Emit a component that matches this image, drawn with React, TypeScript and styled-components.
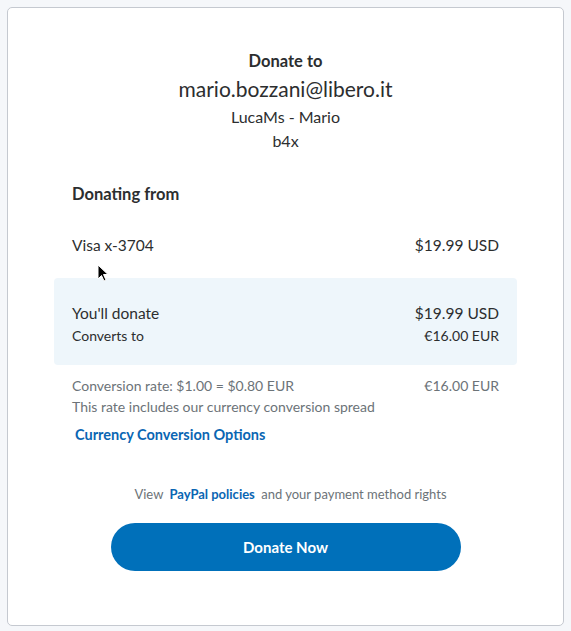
import React from "react";
import styled, { createGlobalStyle } from "styled-components";

const GlobalStyle = createGlobalStyle`
  html, body {
    margin: 0;
    padding: 0;
    background: #f5f7fa;
    font-family: Lato, "Noto Sans", sans-serif;
    color: #2c2e2f;
  }
`;

const App = () => (
  <>
    <GlobalStyle />
    <Page>
      <Card>
        <Recipient>
          <Label>Donate to</Label>
          <Email>mario.bozzani@libero.it</Email>
          <Sub>LucaMs - Mario</Sub>
          <Sub>b4x</Sub>
        </Recipient>

        <SectionTitle>Donating from</SectionTitle>

        <SourceRow>
          <MainText>Visa x-3704</MainText>
          <MainText>$19.99 USD</MainText>
        </SourceRow>

        <Summary>
          <Row>
            <MainText>You'll donate</MainText>
            <MainText>$19.99 USD</MainText>
          </Row>
          <Row>
            <SmallText>Converts to</SmallText>
            <SmallText>€16.00 EUR</SmallText>
          </Row>
        </Summary>

        <RateBlock>
          <Row>
            <GreyText>Conversion rate: $1.00 = $0.80 EUR</GreyText>
            <GreyText>€16.00 EUR</GreyText>
          </Row>
          <GreyText>This rate includes our currency conversion spread</GreyText>
          <Link>Currency Conversion Options</Link>
        </RateBlock>

        <Policy>
          View <PolicyLink>PayPal policies</PolicyLink> and your payment method rights
        </Policy>

        <DonateButton>Donate Now</DonateButton>

        <Cursor width="12" height="19" viewBox="0 0 12 19">
          <path d="M1 1 L1 15 L4.5 11.5 L7 17 L9 16 L6.5 10.5 L11 10.5 Z" fill="#000" stroke="#fff" strokeWidth="1" />
        </Cursor>
      </Card>
    </Page>
  </>
);

export default App;

const Page = styled.div`
  padding: 7px 7px 5px 7px;
`;

const Card = styled.div`
  position: relative;
  background: #fff;
  border: 1px solid #c5c9d0;
  border-radius: 5px;
  padding: 42px 64px 40px 64px;
  min-height: 535px;
`;

const Recipient = styled.div`
  display: flex;
  flex-direction: column;
  align-items: center;
  text-align: center;
`;

const Label = styled.div`
  font-size: 16.5px;
  font-weight: 700;
  line-height: 22px;
`;

const Email = styled.div`
  font-size: 21px;
  line-height: 33px;
`;

const Sub = styled.div`
  font-size: 16px;
  line-height: 24px;
`;

const SectionTitle = styled.div`
  margin-top: 30px;
  font-size: 16.5px;
  font-weight: 700;
  line-height: 22px;
`;

const Row = styled.div`
  display: flex;
  justify-content: space-between;
  align-items: baseline;
`;

const SourceRow = styled(Row)`
  margin-top: 29px;
`;

const MainText = styled.span`
  font-size: 15.5px;
  line-height: 22px;
`;

const SmallText = styled.span`
  font-size: 14px;
  line-height: 22px;
`;

const Summary = styled.div`
  margin: 22px -18px 0 -18px;
  padding: 24px 18px 18px 18px;
  background: #eef6fb;
  border-radius: 4px;
  & > ${Row}:first-child {
    margin-bottom: 1px;
  }
`;

const GreyText = styled.span`
  font-size: 14px;
  line-height: 21px;
  color: #6c7378;
`;

const RateBlock = styled.div`
  display: flex;
  flex-direction: column;
  margin-top: 10px;
`;

const Link = styled.div`
  color: #0a66b3;
  font-size: 14.5px;
  font-weight: 700;
  margin: 7px 0 0 3px;
  line-height: 21px;
`;

const Policy = styled.div`
  margin-top: 39px;
  padding-left: 10px;
  text-align: center;
  font-size: 13px;
  color: #6c7378;
  line-height: 20px;
`;

const PolicyLink = styled.span`
  color: #0a66b3;
  font-weight: 700;
  margin: 0 3px;
`;

const DonateButton = styled.button`
  display: block;
  width: 350px;
  height: 48px;
  margin: 19px auto 0 auto;
  border: none;
  border-radius: 24px;
  background: #0070ba;
  color: #fff;
  font-family: Lato, "Noto Sans", sans-serif;
  font-size: 15px;
  font-weight: 700;
`;

const Cursor = styled.svg`
  position: absolute;
  left: 89px;
  top: 256px;
`;
